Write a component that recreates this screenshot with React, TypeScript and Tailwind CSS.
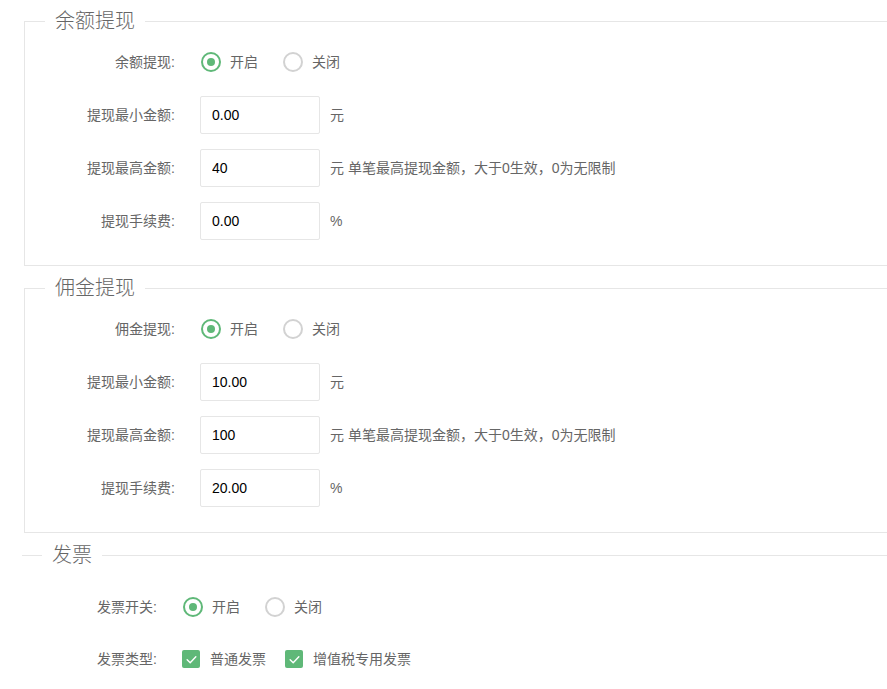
import type { ReactNode } from "react";

const font = { fontFamily: '"Liberation Sans", "Noto Sans CJK SC", sans-serif' };

function Radio({ checked, label }: { checked?: boolean; label: string }) {
  return (
    <span className="flex items-center">
      <span
        className={
          checked
            ? "flex h-5 w-5 items-center justify-center rounded-full border-2 border-[#5fb878]"
            : "flex h-5 w-5 items-center justify-center rounded-full border-2 border-[#d2d2d2]"
        }
      >
        {checked && <span className="h-2 w-2 rounded-full bg-[#5fb878]" />}
      </span>
      <span className="ml-[9px] text-[14px] text-[#666]">{label}</span>
    </span>
  );
}

function Checkbox({ label }: { label: string }) {
  return (
    <span className="flex items-center">
      <span className="flex h-[18px] w-[18px] items-center justify-center rounded-[2px] bg-[#5fb878]">
        <svg viewBox="0 0 12 12" className="h-[13px] w-[13px]" fill="none">
          <path d="M2 6.2 4.8 8.9 10 3.4" stroke="white" strokeWidth="1.3" strokeLinecap="round" strokeLinejoin="round" />
        </svg>
      </span>
      <span className="ml-[10px] text-[14px] text-[#666]">{label}</span>
    </span>
  );
}

function Row({ label, children, narrow }: { label: string; children: ReactNode; narrow?: boolean }) {
  return (
    <div className="flex h-[38px] items-center">
      <label className={narrow ? "w-[135px] shrink-0 text-right text-[14px] text-[#666]" : "w-[150px] shrink-0 text-right text-[14px] text-[#666]"}>
        {label}
      </label>
      <div className="ml-[25px] flex items-center">{children}</div>
    </div>
  );
}

function Amount({ value, unit }: { value: string; unit: string }) {
  return (
    <>
      <input
        defaultValue={value}
        className="h-[38px] w-[120px] rounded-[2px] border border-[#e6e6e6] bg-white pl-[11px] text-[14px] text-black outline-none"
      />
      <span className="ml-[10px] text-[14px] text-[#666]">{unit}</span>
    </>
  );
}

function Toggle() {
  return (
    <div className="ml-px flex items-center gap-[25px]">
      <Radio checked label="开启" />
      <Radio label="关闭" />
    </div>
  );
}

function WithdrawSet({ title, min, max, fee }: { title: string; min: string; max: string; fee: string }) {
  return (
    <fieldset className="ml-[2px] w-[880px] border border-[#e6e6e6] pb-[25px] pt-[10px]">
      <legend className="ml-5 px-2.5 text-[20px] font-light leading-[24px] text-[#666]">{title}</legend>
      <div className="flex flex-col gap-[15px]">
        <Row label={title + ":"}>
          <Toggle />
        </Row>
        <Row label="提现最小金额:">
          <Amount value={min} unit="元" />
        </Row>
        <Row label="提现最高金额:">
          <Amount value={max} unit="元 单笔最高提现金额，大于0生效，0为无限制" />
        </Row>
        <Row label="提现手续费:">
          <Amount value={fee} unit="%" />
        </Row>
      </div>
    </fieldset>
  );
}

export default function App() {
  return (
    <div className="min-h-screen overflow-hidden bg-white pl-[22px] pt-[9px]" style={font}>
      <WithdrawSet title="余额提现" min="0.00" max="40" fee="0.00" />
      <div className="mt-[10px]">
        <WithdrawSet title="佣金提现" min="10.00" max="100" fee="20.00" />
      </div>
      <fieldset className="mt-[10px] w-[880px] border-t border-[#e6e6e6] pt-[21px]">
        <legend className="ml-5 px-2.5 text-[20px] font-light leading-[24px] text-[#666]">发票</legend>
        <div className="flex flex-col gap-[14px]">
          <Row label="发票开关:" narrow>
            <Toggle />
          </Row>
          <Row label="发票类型:" narrow>
            <div className="flex items-center gap-[19px]">
              <Checkbox label="普通发票" />
              <Checkbox label="增值税专用发票" />
            </div>
          </Row>
        </div>
      </fieldset>
    </div>
  );
}
